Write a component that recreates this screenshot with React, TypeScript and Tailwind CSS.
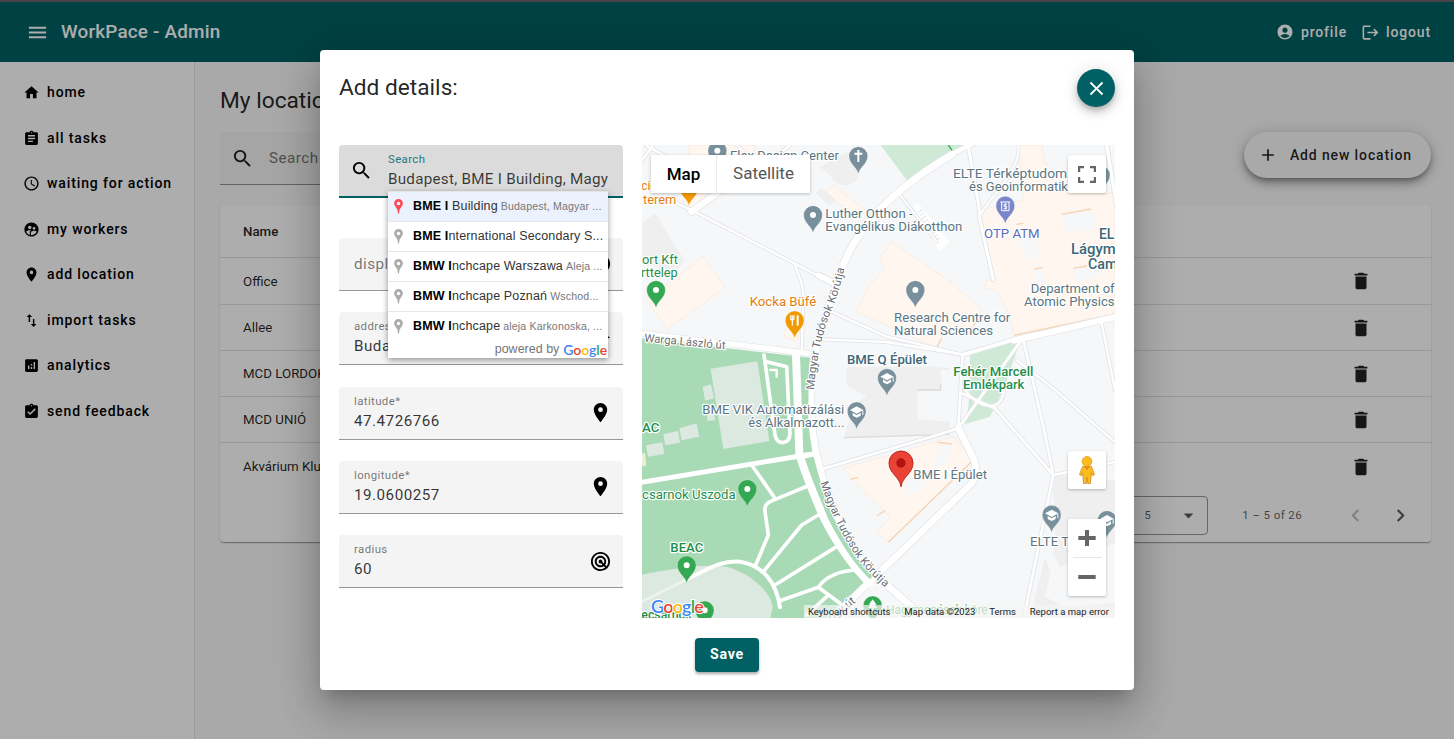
import React from "react";
import type { ReactNode } from "react";
import {
  MdAccountCircle,
  MdAdd,
  MdAnalytics,
  MdArrowDropDown,
  MdAssignment,
  MdAssignmentTurnedIn,
  MdChevronLeft,
  MdChevronRight,
  MdClose,
  MdDelete,
  MdHome,
  MdImportExport,
  MdInfo,
  MdLocationOn,
  MdLogout,
  MdMenu,
  MdRadar,
  MdSchedule,
  MdSearch,
  MdSupervisedUserCircle,
} from "react-icons/md";

const NAV = [
  { icon: MdHome, label: "home" },
  { icon: MdAssignment, label: "all tasks" },
  { icon: MdSchedule, label: "waiting for action" },
  { icon: MdSupervisedUserCircle, label: "my workers" },
  { icon: MdLocationOn, label: "add location" },
  { icon: MdImportExport, label: "import tasks" },
  { icon: MdAnalytics, label: "analytics" },
  { icon: MdAssignmentTurnedIn, label: "send feedback" },
];

const ROWS = ["Office", "Allee", "MCD LORDOK", "MCD UNIÓ", "Akvárium Klub"];

function Header() {
  return (
    <header className="flex h-[62px] shrink-0 items-center border-t-2 border-[#6b6468] bg-[#006064] pr-[23px] pl-[26px] text-white">
      <MdMenu className="size-[23px]" />
      <h1 className="ml-3 pt-px text-[18.9px] font-medium tracking-[0.18px]">WorkPace - Admin</h1>
      <div className="ml-auto flex items-center text-[14px] font-medium tracking-[0.85px]">
        <MdAccountCircle className="size-[18px]" />
        <span className="ml-[7px]">profile</span>
        <MdLogout className="ml-[14px] size-[19px]" />
        <span className="ml-[6px]">logout</span>
      </div>
    </header>
  );
}

function Sidebar() {
  return (
    <nav className="w-[195px] shrink-0 border-r border-[#e0e0e0] bg-white pt-[8px] pl-[23px]">
      {NAV.map(({ icon: Icon, label }) => (
        <div key={label} className="flex h-[45.5px] items-center gap-[7px] text-[14px] font-medium tracking-[0.88px] text-black">
          <Icon className="size-[17px]" />
          {label}
        </div>
      ))}
    </nav>
  );
}

function Locations() {
  return (
    <main className="flex-1 bg-[#fafafa] pr-[23px] pl-[25px] text-black/87">
      <h2 className="pt-[23px] text-[22.7px] leading-[32px]">My locations</h2>
      <div className="mt-[15px] flex items-center justify-between">
        <div className="flex h-[53px] w-[400px] items-center gap-[15px] rounded-t border-b border-black/40 bg-[#f3f3f3] pl-[11px]">
          <MdSearch className="size-[23px]" />
          <span className="text-[15.2px] tracking-[0.5px] text-black/55">Search</span>
        </div>
        <div className="-mt-[8px] flex h-[46px] items-center rounded-full bg-[#fafafa] pr-[19px] pl-[14px] shadow-[0_3px_5px_-1px_rgba(0,0,0,0.3),0_6px_10px_rgba(0,0,0,0.2),0_1px_18px_rgba(0,0,0,0.16)]">
          <MdAdd className="size-[20px]" />
          <span className="ml-3 pt-px text-[14px] font-medium tracking-[0.88px]">Add new location</span>
        </div>
      </div>
      <section className="mt-[20px] h-[337px] rounded-sm bg-white text-[13.3px] shadow-[0_2px_1px_-1px_rgba(0,0,0,0.2),0_1px_1px_rgba(0,0,0,0.14),0_1px_3px_rgba(0,0,0,0.12)]">
        <div className="flex h-[53.4px] items-center border-b border-black/12 pt-px pl-[23px] font-medium">Name</div>
        {ROWS.map((r) => (
          <div key={r} className="flex h-[46.2px] items-center justify-between border-b border-black/12 pt-px pr-[59px] pl-[23px] last-of-type:border-0">
            {r}
            <MdDelete className="size-[22px]" />
          </div>
        ))}
        <footer className="flex h-[53px] items-center justify-end text-[11.6px] tracking-[0.35px] text-black/65">
          <div className="flex h-[39px] w-[80px] items-center justify-between rounded border border-black/40 pr-[7px] pl-[15px]">
            5<MdArrowDropDown className="size-[23px]" />
          </div>
          <span className="ml-[34px]">1 – 5 of 26</span>
          <MdChevronLeft className="ml-[41px] size-[25px] text-black/25" />
          <MdChevronRight className="mr-[18px] ml-[20px] size-[25px]" />
        </footer>
      </section>
    </main>
  );
}

function Field({ label, value, icon, placeholder }: { label?: string; value?: string; placeholder?: string; icon: ReactNode }) {
  return (
    <div className="flex h-[53px] items-center justify-between rounded-t border-b border-[#979797] bg-[#f4f4f4] pr-[11px] pl-[15px]">
      {placeholder ? (
        <span className="pt-px text-[15.2px] tracking-[0.5px] text-black/55">{placeholder}</span>
      ) : (
        <div className="flex flex-col">
          <span className="text-[11.4px] leading-[15px] tracking-[0.4px] text-black/55">{label}</span>
          <span className="mt-[2px] mb-px text-[15.2px] leading-[20px] tracking-[0.5px] text-black/80">{value}</span>
        </div>
      )}
      {icon}
    </div>
  );
}

function GoogleWord({ className }: { className: string }) {
  return (
    <span className={className}>
      <span className="text-[#4285f4]">G</span>
      <span className="text-[#ea4335]">o</span>
      <span className="text-[#fbbc05]">o</span>
      <span className="text-[#4285f4]">g</span>
      <span className="text-[#34a853]">l</span>
      <span className="text-[#ea4335]">e</span>
    </span>
  );
}

const SUGGESTIONS = [
  { bold: "BME I", rest: " Building", sub: "Budapest, Magyar ..." },
  { bold: "BME I", rest: "nternational Secondary S...", sub: "" },
  { bold: "BMW I", rest: "nchcape Warszawa", sub: "Aleja ..." },
  { bold: "BMW I", rest: "nchcape Poznań", sub: "Wschod..." },
  { bold: "BMW I", rest: "nchcape", sub: "aleja Karkonoska, ..." },
];

function Suggestions() {
  return (
    <div className="absolute top-[46px] left-[49px] z-10 h-[167px] w-[220px] bg-white font-['Liberation_Sans',sans-serif] shadow-[0_2px_6px_rgba(0,0,0,0.4)]">
      {SUGGESTIONS.map((s, i) => (
        <div
          key={s.rest}
          className={
            "flex h-[30px] items-center border-t border-[#e6e6e6] pl-[6px] whitespace-nowrap " +
            (i === 0 ? "bg-[#ebf2fe]" : "")
          }
        >
          <svg viewBox="0 0 9 15" className="h-[15px] w-[9px] shrink-0">
            <path
              fillRule="evenodd"
              fill={i === 0 ? "#fd4b55" : "#ababab"}
              d="M4.5 0a4.4 4.4 0 0 1 4.4 4.5c0 2.600-2.700 4.200-3.400 6.500L5 14.500H4L3.500 11C2.800 8.700.1 7.100.1 4.500A4.400 4.400 0 0 1 4.500 0zm0 2.700a1.800 1.800 0 1 0 0 3.600 1.800 1.800 0 0 0 0-3.600z"
            />
          </svg>
          <span className="ml-[10px] text-[12.5px] tracking-[0.15px] text-[#333]">
            <b className="font-bold text-black">{s.bold}</b>
            {s.rest}
          </span>
          <span className="ml-[3px] pt-px text-[10.6px] tracking-[0.15px] text-[#777]">{s.sub}</span>
        </div>
      ))}
      <div className="flex h-[17px] items-center justify-end pr-px text-[12.5px] text-[#757575]">
        powered by
        <GoogleWord className="ml-1 font-[Lato] text-[14px] font-semibold tracking-[-0.1px]" />
      </div>
    </div>
  );
}

type PinKind = "dot" | "grad" | "cross" | "food" | "atm" | "tree";
const PINS: { x: number; y: number; c: string; k: PinKind }[] = [
  { x: 232, y: 272, c: "#78909c", k: "dot" },
  { x: 147, y: 383, c: "#f29900", k: "dot" },
  { x: 655, y: 288, c: "#78909c", k: "cross" },
  { x: 519, y: 465, c: "#78909c", k: "dot" },
  { x: 826, y: 690, c: "#78909c", k: "dot" },
  { x: 1382, y: 345, c: "#78909c", k: "dot" },
  { x: 1096, y: 437, c: "#7986cb", k: "atm" },
  { x: 48, y: 690, c: "#34a853", k: "dot" },
  { x: 464, y: 781, c: "#f29900", k: "food" },
  { x: 741, y: 954, c: "#78909c", k: "grad" },
  { x: 650, y: 1054, c: "#78909c", k: "grad" },
  { x: 1235, y: 1364, c: "#78909c", k: "grad" },
  { x: 1401, y: 1380, c: "#78909c", k: "grad" },
  { x: 322, y: 1287, c: "#34a853", k: "dot" },
  { x: 140, y: 1516, c: "#34a853", k: "dot" },
  { x: 194, y: 1651, c: "#34a853", k: "dot" },
  { x: 698, y: 1636, c: "#34a853", k: "tree" },
];

function PinGlyph({ k }: { k: PinKind }) {
  switch (k) {
    case "grad":
      return (
        <g fill="#fff">
          <path d="M-20-4 0-15 20-4 0 7z" />
          <path d="M-12 4v9l12 6 12-6V4L0 11z" />
          <path d="M17-3h3v14h-3z" />
        </g>
      );
    case "cross":
      return <path d="M0-18V18M-12-7H12" stroke="#fff" strokeWidth="6" fill="none" />;
    case "food":
      return (
        <g stroke="#fff" fill="none" strokeWidth="3.500">
          <path d="M-12-15v11q0 3 5 3t5-3v-11M-7-15V16" />
          <path d="M9-15V16" strokeWidth="6" />
        </g>
      );
    case "atm":
      return (
        <g stroke="#fff" fill="none" strokeWidth="3">
          <path d="M-15-11H15M-11-11V15H11V-11" />
          <path d="M5-4H-4V2H4V9H-5M0-8V12" strokeWidth="2.500" />
        </g>
      );
    case "tree":
      return <path d="M0-18-12-2h6l-8 10H-3v10h6V8h11L6-2h6z" fill="#fff" />;
    default:
      return <circle r="9" fill="#fff" />;
  }
}

const MINOR_ROADS: { d: string; w: number }[] = [
  { d: "M38 258 0 310M20 258 190 350M290 255 340 300M380 310 450 255", w: 8 },
  { d: "M80 415 170 458 575 668", w: 8 },
  { d: "M535 646 580 668", w: 18 },
  { d: "M465 612C470 640 490 660 490 710L485 880", w: 8 },
  { d: "M575 755 740 830 968 884", w: 8 },
  { d: "M545 838 740 846 968 884", w: 8 },
  { d: "M968 884 1145 832", w: 12 },
  { d: "M968 884 955 1100", w: 9 },
  { d: "M985 258 1017 440 1020 480 1060 660", w: 10 },
  { d: "M1135 255C1145 330 1050 410 1017 470", w: 7 },
  { d: "M780 405 890 545", w: 7 },
  { d: "M1148 832 1210 1100 1240 1245", w: 9 },
  { d: "M1385 790 1425 990", w: 8 },
  { d: "M1130 900 1240 985 1440 1160", w: 8 },
  { d: "M1148 835 955 1105", w: 9 },
  { d: "M1062 1042 1240 1245 1150 1680", w: 9 },
  { d: "M1240 1245 1430 1205", w: 8 },
  { d: "M970 980C1000 1040 1090 1070 1092 985M965 1000 1065 1045", w: 8 },
  { d: "M550 1226 870 1132 955 1105", w: 9 },
  { d: "M1400 255 1430 440", w: 11 },
];

const MAIN_ROADS: { d: string; w: number }[] = [
  { d: "M1030 235 930 285", w: 14 },
  { d: "M935 284C840 340 750 410 700 470 650 530 625 570 600 640 565 740 530 850 512 950 508 1040 515 1140 540 1230 580 1370 640 1480 690 1530L860 1680", w: 21 },
  { d: "M6 820 505 880", w: 16 },
  { d: "M155 455 250 385", w: 20 },
  { d: "M1122 842 1430 770", w: 18 },
  { d: "M955 1105 1003 1200C1012 1230 1005 1260 990 1275L550 1700", w: 20 },
];

const PARK_ROADS: { d: string; w: number }[] = [
  { d: "M468 885 478 1180C490 1230 520 1300 550 1370 590 1450 640 1520 690 1570", w: 24 },
  { d: "M0 1268 480 1188 530 1180", w: 15 },
  { d: "M335 1215 405 1315", w: 11 },
  { d: "M510 1275 390 1325Q372 1335 375 1355L385 1425 345 1520", w: 11 },
  { d: "M540 1362 485 1395 370 1535", w: 11 },
  { d: "M590 1460 405 1575", w: 11 },
  { d: "M650 1530C600 1532 555 1550 535 1582L420 1622", w: 11 },
  { d: "M535 1582 600 1630M560 1610 500 1665", w: 11 },
  { d: "M140 1558C200 1530 240 1500 300 1505 370 1515 410 1570 420 1642", w: 12 },
  { d: "M372 885 405 1125Q410 1148 428 1148 450 1146 450 1120L440 920 380 905", w: 11 },
  { d: "M390 930h20v20", w: 7 },
];

const GREY = "#5b7682";
const GREEN = "#1e8e4a";
type MapLabel = { t: string; x: number; y: number; l: number; c: string; b?: boolean; s?: number };
const LABELS: MapLabel[] = [
  { t: "Flex Design Center", x: 270, y: 300, l: 327, c: GREY },
  { t: "cie", x: 4, y: 391, l: 46, c: "#e37d0e" },
  { t: "terem", x: 9, y: 431, l: 100, c: "#e37d0e" },
  { t: "Luther Otthon -", x: 556, y: 474, l: 262, c: GREY },
  { t: "Evangélikus Diákotthon", x: 556, y: 513, l: 411, c: GREY },
  { t: "ELTE Térképtudomá", x: 939, y: 353, l: 365, c: GREY },
  { t: "és Geoinformatika", x: 987, y: 392, l: 318, c: GREY },
  { t: "OTP ATM", x: 1032, y: 534, l: 167, c: "#5c6bc0" },
  { t: "EL", x: 1377, y: 536, l: 46, c: "#3b6777", b: true, s: 43 },
  { t: "Lágym", x: 1293, y: 582, l: 134, c: "#3b6777", b: true, s: 43 },
  { t: "Cam", x: 1344, y: 627, l: 88, c: "#3b6777", b: true, s: 43 },
  { t: "Department of", x: 1172, y: 699, l: 252, c: GREY },
  { t: "Atomic Physics", x: 1152, y: 739, l: 272, c: GREY },
  { t: "Research Centre for", x: 762, y: 786, l: 349, c: GREY },
  { t: "Natural Sciences", x: 762, y: 825, l: 297, c: GREY },
  { t: "ort Kft", x: 6, y: 611, l: 108, c: GREEN },
  { t: "rttelep", x: 3, y: 651, l: 110, c: GREEN },
  { t: "Kocka Büfé", x: 329, y: 739, l: 200, c: "#e37d0e" },
  { t: "BME Q Épület", x: 621, y: 913, l: 240, c: "#3b6777", b: true },
  { t: "Fehér Marcell", x: 940, y: 947, l: 240, c: GREEN, b: true },
  { t: "Emlékpark", x: 969, y: 987, l: 184, c: GREEN, b: true },
  { t: "BME VIK Automatizálási", x: 187, y: 1062, l: 426, c: GREY },
  { t: "és Alkalmazott...", x: 325, y: 1101, l: 288, c: GREY },
  { t: "AC", x: 6, y: 1116, l: 52, c: GREEN, b: true },
  { t: "csarnok Uszoda", x: 6, y: 1317, l: 281, c: GREEN },
  { t: "BEAC", x: 91, y: 1475, l: 99, c: GREEN, b: true },
  { t: "ecsarnok", x: 4, y: 1677, l: 152, c: GREEN, b: true },
  { t: "BME I Épület", x: 820, y: 1256, l: 221, c: GREY },
  { t: "ELTE T", x: 1170, y: 1459, l: 117, c: GREY },
  { t: "Hagymenések köre", x: 738, y: 1662, l: 305, c: "#34a853" },
];

function MapCanvas() {
  return (
    <svg viewBox="6 255 1419 1419" className="block size-[473px] font-[Roboto]">
      <rect x="0" y="250" width="1430" height="1430" fill="#f5f7f9" />

      <g fill="#fef6ef" stroke="#fae3cd" strokeWidth="1.500">
        <path d="M148 255H350L250 400 150 450 130 420z" />
        <path d="M20 720 190 590 254 682 82 808z" />
        <path d="M432 830 440 795 480 815 470 845z" />
        <path d="M555 400 580 375 720 485 690 500z" />
        <path d="M755 545 930 665 1025 750 1000 800 920 800 890 864 650 755 685 680 735 625 718 593z" />
        <path d="M1135 255H1205L1220 330 1300 400H1425V760L1122 825 1110 770 1070 690 1035 685 1040 660 1060 660 1020 450 1150 420z" />
        <path d="M610 1225 940 1130 1000 1200 745 1447 710 1415 750 1370 650 1270z" />
      </g>
      <g fill="#f5f7f9">
        <path d="M1268 463 1355 445 1370 505 1280 520zM1140 540 1185 520 1197 590 1155 602zM1185 625 1205 622 1220 668 1190 675zM1300 625 1380 610 1385 650 1305 665z" />
        <path d="M790 1270 825 1245 860 1270 808 1307zM900 1150 935 1160 915 1210 880 1235z" />
      </g>
      <g fill="none" stroke="#f5d3b3" strokeWidth="4">
        <path d="M1266 463 1353 447M1122 826 1425 764M1128 493 1150 490M1184 627 1208 622M1300 625 1340 618M890 862 905 835M1000 797 1012 775M745 1447 1000 1200M630 1258 655 1252M710 1368 735 1352M893 1147 935 1152" />
      </g>

      <g fill="#efeff0">
        <path d="M6 490 45 460 133 600 110 632 6 610z" />
        <path d="M540 322 620 275 655 300V350A46 46 0 0 1 570 345z" />
        <path d="M530 400 545 385 585 420 570 435z" stroke="#d9dbdd" />
        <path d="M620 920H900L930 925V930H902V990H832V1078L930 1085 928 1125 612 1135 640 1030 680 1010 620 975z" />
        <path d="M1240 1245 1425 1260V1450L1260 1520 1240 1480 1245 1440zM1215 1490 1232 1540 1215 1610 1275 1640 1425 1630V1674H1170z" />
        <path d="M820 440 835 430 928 545 900 575z" fill="#fff" />
      </g>
      <path d="M612 1133 928 1123M832 990H902V970" fill="none" stroke="#d8dadc" strokeWidth="4" />
      <path d="M840 452 895 543" stroke="#e0e2e5" strokeWidth="16" strokeDasharray="3 8" />

      <g fill="#ceead6">
        <path d="M722 255H1000L900 295 800 360z" />
        <path d="M990 884 1143 835 1090 990 1050 1070 975 1093 985 1040 990 980z" />
      </g>
      <path d="M925 255 938 274" stroke="#34a853" strokeWidth="4" />

      <path d="M0 835 510 893 508 1080C515 1210 570 1360 630 1450L710 1550 560 1690H0z" fill="#a8dab5" />
      <path d="M0 1545C80 1530 180 1510 260 1520 350 1545 395 1610 398 1640L390 1680H0z" fill="#dce9e1" />
      <g fill="#dce9e1">
        <path d="M212 926 352 904 388 1143 250 1167z" />
        <path d="M188 980 213 973 222 1015 195 1022zM200 1060 222 1057 225 1080 203 1084zM118 1105 170 1090 178 1130 125 1141zM70 1123 114 1113 120 1148 76 1156zM18 1156 67 1147 73 1182 24 1190z" />
      </g>
      <path d="M0 1182 15 1178 19 1216 0 1222z" fill="#eef0d5" />

      {[...MINOR_ROADS, ...MAIN_ROADS].map((r) => (
        <path key={"o" + r.d} d={r.d} fill="none" stroke="#e2e4e7" strokeWidth={r.w + 4} strokeLinejoin="round" strokeLinecap="round" />
      ))}
      {MINOR_ROADS.map((r) => (
        <path key={r.d} d={r.d} fill="none" stroke="#fff" strokeWidth={r.w - 1} strokeLinejoin="round" strokeLinecap="round" />
      ))}
      {[...MAIN_ROADS, ...PARK_ROADS].map((r) => (
        <path key={r.d} d={r.d} fill="none" stroke="#fff" strokeWidth={r.w} strokeLinejoin="round" strokeLinecap="round" />
      ))}
      <path d="M0 1628 150 1553" stroke="#edf2ef" strokeWidth="9" />
      <path d="M500 900 497 1060C497 1160 530 1260 570 1370 610 1450 650 1510 695 1552" fill="none" stroke="#a8dab5" strokeWidth="15" />
      <path d="M480 1190 530 1180" stroke="#fff" strokeWidth="16" />

      <defs>
        <path id="road-north" d="M522 990C530 880 555 790 580 740 598 690 606 660 614 620" />
        <path id="road-south" d="M541 1268C575 1370 620 1450 660 1505 690 1540 705 1555 740 1587" />
        <path id="road-west" d="M12 845 260 868" />
        <path id="road-bottom" d="M560 1695 665 1613" />
      </defs>
      <g fill="#6b6f75" fontSize="34" fontWeight="400" stroke="#fff" strokeWidth="7" strokeLinejoin="round" paintOrder="stroke">
        <text><textPath href="#road-north" textLength="378" lengthAdjust="spacingAndGlyphs">Magyar Tudósok Körútja</textPath></text>
        <text><textPath href="#road-south" textLength="374" lengthAdjust="spacingAndGlyphs">Magyar Tudósok Körútja</textPath></text>
        <text><textPath href="#road-west" textLength="245" lengthAdjust="spacingAndGlyphs">Warga László út</textPath></text>
        <text><textPath href="#road-bottom" startOffset="18">ogy út</textPath></text>
      </g>

      <g strokeLinejoin="round" paintOrder="stroke" stroke="#fff" strokeWidth="7">
        {LABELS.map((l) => (
          <text key={l.t} x={l.x} y={l.y} fill={l.c} fontSize={l.s ?? 39} fontWeight={l.b ? 500 : 400} textLength={l.l} lengthAdjust="spacingAndGlyphs">
            {l.t}
          </text>
        ))}
      </g>

      {PINS.map((p) => (
        <g key={p.x + "-" + p.y} transform={`translate(${p.x} ${p.y})`}>
          <path d="M0 54C-3 34-28 24-28 0A28 28 0 1 1 28 0C28 24 3 34 0 54z" fill={p.c} stroke="#fff" strokeOpacity="0.500" strokeWidth="1.500" />
          <PinGlyph k={p.k} />
        </g>
      ))}
      <g transform="translate(783 1209)">
        <path d="M0 71C-4 40-36 32-36 0A36 36 0 1 1 36 0C36 32 4 40 0 71z" fill="#ea4335" stroke="#b9271c" strokeWidth="3" />
        <circle r="14" fill="#b31412" />
      </g>
    </svg>
  );
}

function MapPanel() {
  return (
    <div className="relative size-[473px] overflow-hidden">
      <MapCanvas />
      <div className="absolute top-[10px] left-[9px] flex h-[38px] items-center bg-white text-[17px] shadow-[0_1px_3px_rgba(0,0,0,0.25)]">
        <span className="w-[66px] border-r border-[#ececec] text-center leading-[38px] font-medium text-black">Map</span>
        <span className="w-[93px] text-center text-[#565656]">Satellite</span>
      </div>
      <div className="absolute top-[10px] left-[426px] flex size-[38px] items-center justify-center rounded-xs bg-white shadow-[0_1px_3px_rgba(0,0,0,0.25)]">
        <svg viewBox="0 0 18 17" className="h-[17px] w-[18px]" fill="none" stroke="#666" strokeWidth="2.200">
          <path d="M1.100 6V1.100H6M12 1.100h4.900V6M16.900 11v4.900H12M6 15.900H1.100V11" />
        </svg>
      </div>
      <div className="absolute top-[306px] left-[426px] flex size-[38px] items-center justify-center rounded-xs bg-white shadow-[0_1px_3px_rgba(0,0,0,0.25)]">
        <svg viewBox="0 0 18 28" className="h-[28px] w-[18px]">
          <path d="M4.500 10.500h9l3 8.200-2 .8-1.200-2.500-.8 10.500H9.700L9 21l-.7 6.500H5.500L4.700 17l-1.200 2.500-2-.8z" fill="#fbbc1c" stroke="#c98a24" strokeWidth="0.800" />
          <path d="M6 10.500h6L9 14z" fill="#e9822b" />
          <circle cx="9" cy="5.500" r="4.900" fill="#fbbc1c" stroke="#dc9a20" strokeWidth="0.700" />
        </svg>
      </div>
      <div className="absolute top-[374px] left-[426px] flex h-[77px] w-[38px] flex-col items-center justify-center rounded-xs bg-white shadow-[0_1px_3px_rgba(0,0,0,0.25)]">
        <svg viewBox="0 0 18 18" className="h-[38px] w-[18px]">
          <path d="M9 1v16M0.300 9h17.400" stroke="#666" strokeWidth="4" />
        </svg>
        <div className="h-px w-[29px] bg-[#e6e6e6]" />
        <svg viewBox="0 0 18 18" className="h-[38px] w-[18px]">
          <path d="M.3 9h17.400" stroke="#666" strokeWidth="4" />
        </svg>
      </div>
      <GoogleWord className="absolute top-[449px] left-[9px] font-[Lato] text-[18px] leading-[24px] font-semibold tracking-[-0.8px] [paint-order:stroke] [-webkit-text-stroke:2px_white]" />
      <div className="absolute top-[460px] left-[162px] flex h-[13px] w-[311px] items-center justify-between bg-[#f5f5f5]/70 pt-px pr-[6px] pl-1 text-[9.5px] whitespace-nowrap text-[#222]">
        <span>Keyboard shortcuts</span>
        <span>Map data ©2023</span>
        <span>Terms</span>
        <span>Report a map error</span>
      </div>
    </div>
  );
}

function DetailsDialog() {
  const pin = <MdLocationOn className="size-[23px]" />;
  return (
    <div className="h-[640px] w-[814px] rounded bg-white px-[19px] pt-[19px] text-black shadow-[0_11px_15px_-7px_rgba(0,0,0,0.2),0_24px_38px_3px_rgba(0,0,0,0.14),0_9px_46px_8px_rgba(0,0,0,0.12)]">
      <div className="flex h-[38px] items-center justify-between">
        <h2 className="text-[22.7px] text-black/87">Add details:</h2>
        <button className="flex size-[38px] items-center justify-center rounded-full bg-[#006064] text-white shadow-[0_3px_5px_-1px_rgba(0,0,0,0.2),0_6px_10px_rgba(0,0,0,0.14),0_1px_18px_rgba(0,0,0,0.12)]">
          <MdClose className="size-[23px]" />
        </button>
      </div>
      <div className="mt-[38px] flex gap-[19px]">
        <div className="relative w-[284px] shrink-0">
          <div className="flex h-[53px] items-center rounded-t border-b-2 border-[#006064] bg-[#dbdbdb] pl-[11px]">
            <MdSearch className="size-[23px]" />
            <div className="ml-[15px] flex w-[220px] flex-col overflow-hidden">
              <span className="text-[11.4px] leading-[15px] tracking-[0.4px] text-[#26777a]">Search</span>
              <span className="mt-[2px] mb-px text-[15.2px] leading-[20px] tracking-[0.27px] whitespace-nowrap text-black/75">Budapest, BME I Building, Magy</span>
            </div>
          </div>
          <Suggestions />
          <div className="mt-[40px] flex flex-col gap-[21.3px]">
            <Field placeholder="display name*" icon={<MdInfo className="size-[22px]" />} />
            <Field label="address*" value="Budapest, Magyar tudósok" icon={<MdHome className="size-[22px]" />} />
            <Field label="latitude*" value="47.4726766" icon={pin} />
            <Field label="longitude*" value="19.0600257" icon={pin} />
            <Field label="radius" value="60" icon={<MdRadar className="size-[23px]" />} />
          </div>
        </div>
        <MapPanel />
      </div>
      <div className="mt-[20px] flex justify-center">
        <button className="h-[34px] w-[64px] rounded bg-[#006064] text-[14.2px] font-bold tracking-[0.7px] text-white shadow-[0_2px_3px_rgba(0,0,0,0.35)]">Save</button>
      </div>
    </div>
  );
}

export default function App() {
  return (
    <div className="relative flex h-[739px] w-[1454px] flex-col overflow-hidden font-[Roboto,sans-serif]">
      <Header />
      <div className="flex flex-1">
        <Sidebar />
        <Locations />
      </div>
      <div className="absolute inset-0 flex items-start justify-center bg-black/32 pt-[50px]">
        <DetailsDialog />
      </div>
    </div>
  );
}
